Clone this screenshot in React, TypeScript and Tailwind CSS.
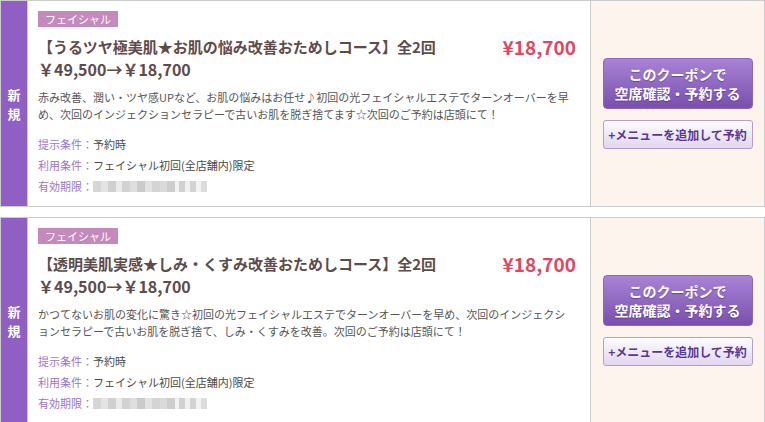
import React from 'react';

type Coupon = {
  title: string;
  prices: string;
  price: string;
  desc: string;
};

const coupons: Coupon[] = [
  {
    title: '【うるツヤ極美肌★お肌の悩み改善おためしコース】全2回',
    prices: '￥49,500→￥18,700',
    price: '¥18,700',
    desc: '赤み改善、潤い・ツヤ感UPなど、お肌の悩みはお任せ♪初回の光フェイシャルエステでターンオーバーを早め、次回のインジェクションセラピーで古いお肌を脱ぎ捨てます☆次回のご予約は店頭にて！',
  },
  {
    title: '【透明美肌実感★しみ・くすみ改善おためしコース】全2回',
    prices: '￥49,500→￥18,700',
    price: '¥18,700',
    desc: 'かつてないお肌の変化に驚き☆初回の光フェイシャルエステでターンオーバーを早め、次回のインジェクションセラピーで古いお肌を脱ぎ捨て、しみ・くすみを改善。次回のご予約は店頭にて！',
  },
];

// blurred expiry date, drawn as a mosaic
const mosaic = [
  ['w-[8px]', 'bg-[#d6d6d6]'],
  ['w-[7px]', 'bg-[#e4e4e4]'],
  ['w-[8px]', 'bg-[#cfcfcf]'],
  ['w-[6px]', 'bg-[#ebebeb]'],
  ['w-[8px]', 'bg-[#d2d2d2]'],
  ['w-[7px]', 'bg-[#dedede]'],
  ['w-[8px]', 'bg-[#cacaca]'],
  ['w-[7px]', 'bg-[#e2e2e2]'],
  ['w-[8px]', 'bg-[#d4d4d4]'],
  ['w-[7px]', 'bg-[#dadada]'],
  ['w-[8px]', 'bg-[#cdcdcd]'],
  ['w-[4px]', 'bg-[#f2f2f2]'],
  ['w-[6px]', 'bg-[#d0d0d0]'],
  ['w-[5px]', 'bg-[#f0f0f0]'],
  ['w-[6px]', 'bg-[#d3d3d3]'],
  ['w-[5px]', 'bg-[#f3f3f3]'],
  ['w-[6px]', 'bg-[#dcdcdc]'],
];

const CouponCard: React.FC<{ coupon: Coupon }> = ({ coupon }) => {
  return (
    <div className="flex border border-[#cccccc] bg-white">
      <div className="w-[27px] shrink-0 bg-[#8f5fc4] border-r border-[#cccccc] flex flex-col items-center justify-center text-white font-bold text-[13px] leading-[19px]">
        <span>新</span>
        <span>規</span>
      </div>

      <div className="flex-1 pl-[10px] pr-[14px] pt-[10px] pb-[9px]">
        <div className="w-[80px] h-[16px] bg-[#c58abc] text-white text-[11px] leading-[16px] text-center">
          フェイシャル
        </div>

        <div className="mt-[9px] flex justify-between items-start">
          <h2 className="font-bold text-[#5e4b4b] text-[15px] leading-[22px]">
            {coupon.title}
            <br />
            <span className="text-[16px]">{coupon.prices}</span>
          </h2>
          <div className="font-bold text-[#e0465f] text-[19px] leading-[22px]">{coupon.price}</div>
        </div>

        <p className="mt-[8px] max-w-[534px] text-[11px] leading-[17px] text-[#555555]">{coupon.desc}</p>

        <div className="mt-[11px] text-[11px] leading-[21px] text-[#4a4a4a]">
          <div>
            <span className="text-[#9b76c9]">提示条件：</span>予約時
          </div>
          <div>
            <span className="text-[#9b76c9]">利用条件：</span>フェイシャル初回(全店舗内)限定
          </div>
          <div className="flex items-center">
            <span className="text-[#9b76c9]">有効期限：</span>
            <span className="flex h-[11px]">
              {mosaic.map(([w, bg], i) => (
                <span key={i} className={`${w} ${bg} h-full`} />
              ))}
            </span>
          </div>
        </div>
      </div>

      <div className="w-[174px] shrink-0 border-l border-[#cccccc] bg-[#fdf4ee] flex flex-col items-center justify-center gap-[11px]">
        <button className="w-[150px] h-[51px] rounded-[4px] border border-[#8b66bd] bg-linear-to-b from-[#a883d6] to-[#7a4fad] text-white font-bold text-[14px] leading-[19px] [text-shadow:0_1px_1px_rgba(60,20,90,0.45)]">
          このクーポンで
          <br />
          空席確認・予約する
        </button>
        <button className="w-[150px] h-[29px] rounded-[3px] border border-[#b49cd1] bg-linear-to-b from-[#fdfcfe] to-[#e2d6ef] text-[#5a3890] font-bold text-[12px]">
          +メニューを追加して予約
        </button>
      </div>
    </div>
  );
};

const App: React.FC = () => {
  return (
    <div className="w-[765px] flex flex-col gap-[10px] bg-white font-['Noto_Sans_CJK_JP',sans-serif]">
      {coupons.map((c, i) => (
        <CouponCard key={i} coupon={c} />
      ))}
    </div>
  );
};

export default App;
